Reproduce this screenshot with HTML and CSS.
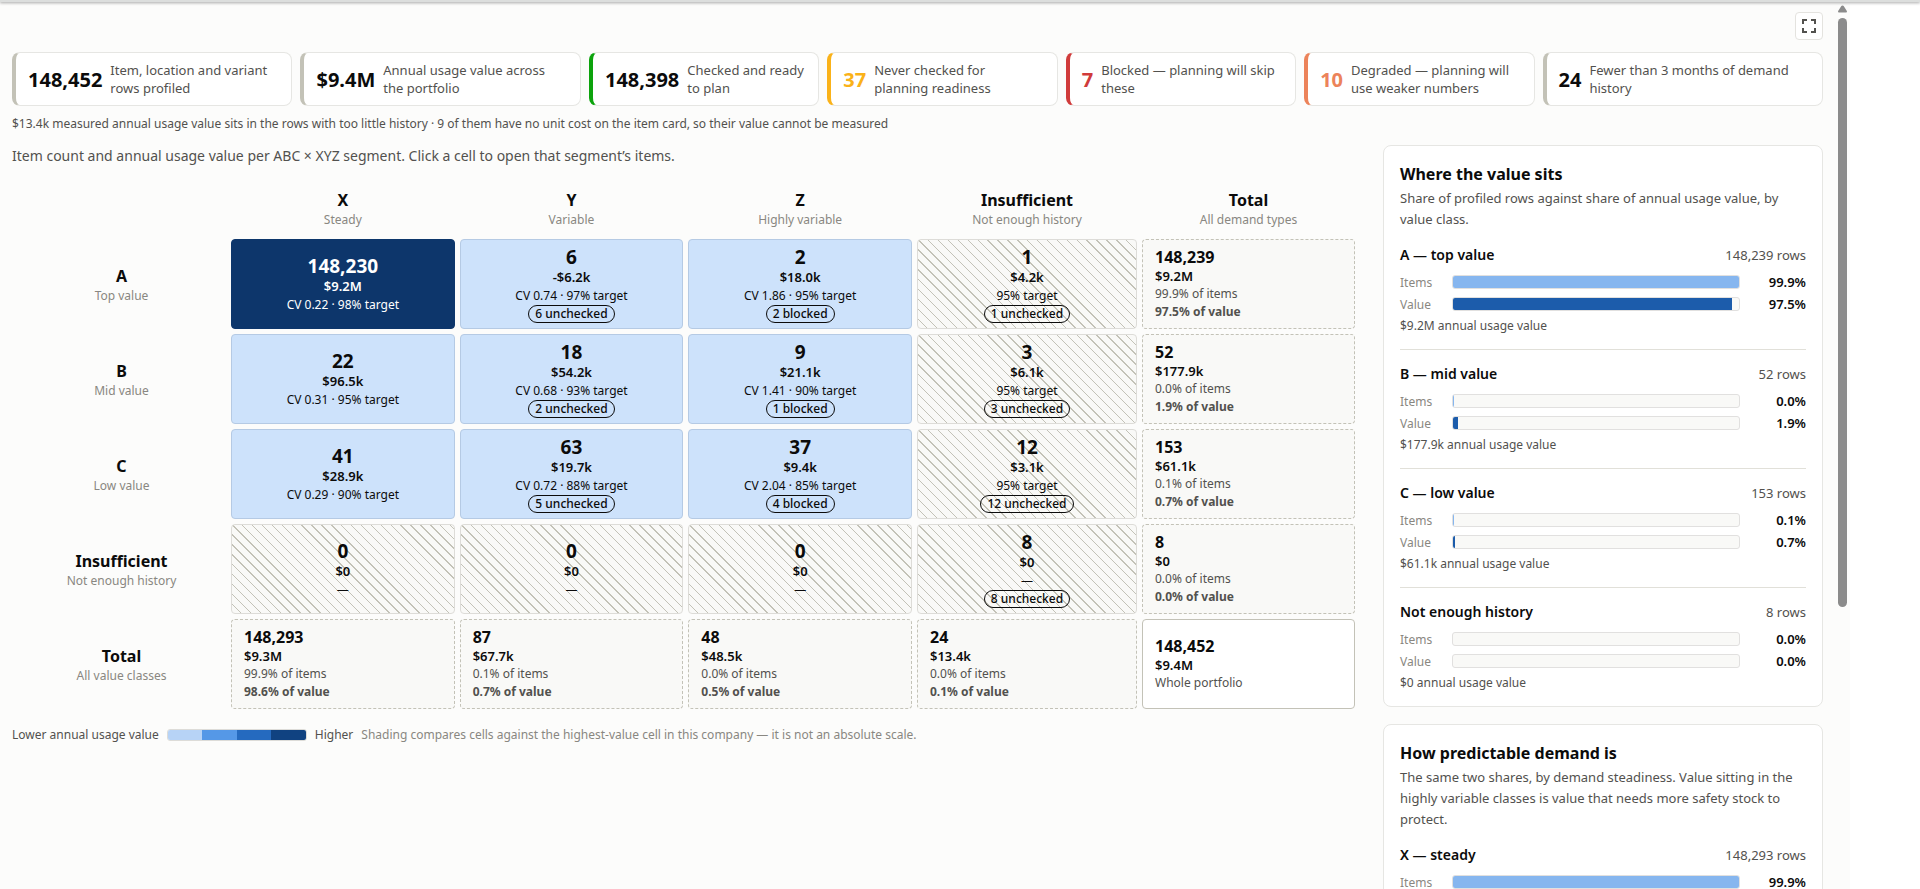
FILE: index.html
```
<!DOCTYPE html>
<html lang="en">

<head>
    <meta charset="UTF-8">
    <meta name="viewport" content="width=device-width, initial-scale=1.0">
    <title>ABC / XYZ segmentation</title>
    <link rel="stylesheet" href="styles.css">
</head>

<body>
    <header class="topbar"></header>
    <div class="page">
        <div class="content">
            <div class="toolbar">
                <button class="expand" aria-label="Full screen">
                    <svg width="16" height="16" viewBox="0 0 16 16" fill="none" stroke="#52514e" stroke-width="2">
                        <path d="M2 6V2h4M10 2h4v4M14 10v4h-4M6 14H2v-4" />
                    </svg>
                </button>
            </div>

            <div class="kpis">
                <div class="kpi"><strong>148,452</strong><span>Item, location and variant rows profiled</span></div>
                <div class="kpi"><strong>$9.4M</strong><span>Annual usage value across<br>the portfolio</span></div>
                <div class="kpi ready"><strong>148,398</strong><span>Checked and ready to plan</span></div>
                <div class="kpi unchecked"><strong>37</strong><span>Never checked for<br>planning readiness</span></div>
                <div class="kpi blocked"><strong>7</strong><span>Blocked — planning will skip these</span></div>
                <div class="kpi degraded"><strong>10</strong><span>Degraded — planning will use weaker numbers</span></div>
                <div class="kpi"><strong>24</strong><span>Fewer than 3 months of demand history</span></div>
            </div>
            <p class="note">$13.4k measured annual usage value sits in the rows with too little history · 9 of them have no unit cost on the item card, so their value cannot be measured</p>

            <div class="columns">
                <main>
                    <p class="intro">Item count and annual usage value per ABC × XYZ segment. Click a cell to open that segment’s items.</p>
                    <table class="matrix">
                        <colgroup>
                            <col class="col-head">
                            <col>
                            <col>
                            <col>
                            <col class="col-insufficient">
                            <col class="col-total">
                        </colgroup>
                        <thead>
                            <tr>
                                <td></td>
                                <th scope="col">X<small>Steady</small></th>
                                <th scope="col">Y<small>Variable</small></th>
                                <th scope="col">Z<small>Highly variable</small></th>
                                <th scope="col">Insufficient<small>Not enough history</small></th>
                                <th scope="col">Total<small>All demand types</small></th>
                            </tr>
                        </thead>
                        <tbody>
                            <tr>
                                <th scope="row">A<small>Top value</small></th>
                                <td><button class="cell top"><b>148,230</b><strong>$9.2M</strong><span>CV 0.22 · 98% target</span></button></td>
                                <td><button class="cell"><b>6</b><strong>-$6.2k</strong><span>CV 0.74 · 97% target</span><em>6 unchecked</em></button></td>
                                <td><button class="cell"><b>2</b><strong>$18.0k</strong><span>CV 1.86 · 95% target</span><em>2 blocked</em></button></td>
                                <td><button class="cell hatched"><b>1</b><strong>$4.2k</strong><span>95% target</span><em>1 unchecked</em></button></td>
                                <td><div class="total"><b>148,239</b><strong>$9.2M</strong><span>99.9% of items</span><span class="share">97.5% of value</span></div></td>
                            </tr>
                            <tr>
                                <th scope="row">B<small>Mid value</small></th>
                                <td><button class="cell"><b>22</b><strong>$96.5k</strong><span>CV 0.31 · 95% target</span></button></td>
                                <td><button class="cell"><b>18</b><strong>$54.2k</strong><span>CV 0.68 · 93% target</span><em>2 unchecked</em></button></td>
                                <td><button class="cell"><b>9</b><strong>$21.1k</strong><span>CV 1.41 · 90% target</span><em>1 blocked</em></button></td>
                                <td><button class="cell hatched"><b>3</b><strong>$6.1k</strong><span>95% target</span><em>3 unchecked</em></button></td>
                                <td><div class="total"><b>52</b><strong>$177.9k</strong><span>0.0% of items</span><span class="share">1.9% of value</span></div></td>
                            </tr>
                            <tr>
                                <th scope="row">C<small>Low value</small></th>
                                <td><button class="cell"><b>41</b><strong>$28.9k</strong><span>CV 0.29 · 90% target</span></button></td>
                                <td><button class="cell"><b>63</b><strong>$19.7k</strong><span>CV 0.72 · 88% target</span><em>5 unchecked</em></button></td>
                                <td><button class="cell"><b>37</b><strong>$9.4k</strong><span>CV 2.04 · 85% target</span><em>4 blocked</em></button></td>
                                <td><button class="cell hatched"><b>12</b><strong>$3.1k</strong><span>95% target</span><em>12 unchecked</em></button></td>
                                <td><div class="total"><b>153</b><strong>$61.1k</strong><span>0.1% of items</span><span class="share">0.7% of value</span></div></td>
                            </tr>
                            <tr>
                                <th scope="row">Insufficient<small>Not enough history</small></th>
                                <td><button class="cell hatched"><b>0</b><strong>$0</strong><span>—</span></button></td>
                                <td><button class="cell hatched"><b>0</b><strong>$0</strong><span>—</span></button></td>
                                <td><button class="cell hatched"><b>0</b><strong>$0</strong><span>—</span></button></td>
                                <td><button class="cell hatched"><b>8</b><strong>$0</strong><span>—</span><em>8 unchecked</em></button></td>
                                <td><div class="total"><b>8</b><strong>$0</strong><span>0.0% of items</span><span class="share">0.0% of value</span></div></td>
                            </tr>
                            <tr>
                                <th scope="row">Total<small>All value classes</small></th>
                                <td><div class="total"><b>148,293</b><strong>$9.3M</strong><span>99.9% of items</span><span class="share">98.6% of value</span></div></td>
                                <td><div class="total"><b>87</b><strong>$67.7k</strong><span>0.1% of items</span><span class="share">0.7% of value</span></div></td>
                                <td><div class="total"><b>48</b><strong>$48.5k</strong><span>0.0% of items</span><span class="share">0.5% of value</span></div></td>
                                <td><div class="total"><b>24</b><strong>$13.4k</strong><span>0.0% of items</span><span class="share">0.1% of value</span></div></td>
                                <td><div class="total grand"><b>148,452</b><strong>$9.4M</strong><span>Whole portfolio</span></div></td>
                            </tr>
                        </tbody>
                    </table>
                    <div class="legend">
                        <span>Lower annual usage value</span>
                        <div class="scale"><i></i><i></i><i></i><i></i></div>
                        <span>Higher</span>
                        <span class="hint">Shading compares cells against the highest-value cell in this company — it is not an absolute scale.</span>
                    </div>
                </main>

                <aside>
                    <section class="panel">
                        <h2>Where the value sits</h2>
                        <p>Share of profiled rows against share of annual usage value, by value class.</p>
                        <div class="group">
                            <div class="group-head"><h3>A — top value</h3><span>148,239 rows</span></div>
                            <div class="row"><span>Items</span><div class="track"><div class="bar" style="width: 99.9%"></div></div><b>99.9%</b></div>
                            <div class="row"><span>Value</span><div class="track"><div class="bar value" style="width: 97.5%"></div></div><b>97.5%</b></div>
                            <div class="foot">$9.2M annual usage value</div>
                        </div>
                        <div class="group">
                            <div class="group-head"><h3>B — mid value</h3><span>52 rows</span></div>
                            <div class="row"><span>Items</span><div class="track"><div class="bar" style="width: 0.3%"></div></div><b>0.0%</b></div>
                            <div class="row"><span>Value</span><div class="track"><div class="bar value" style="width: 1.9%"></div></div><b>1.9%</b></div>
                            <div class="foot">$177.9k annual usage value</div>
                        </div>
                        <div class="group">
                            <div class="group-head"><h3>C — low value</h3><span>153 rows</span></div>
                            <div class="row"><span>Items</span><div class="track"><div class="bar" style="width: 0.3%"></div></div><b>0.1%</b></div>
                            <div class="row"><span>Value</span><div class="track"><div class="bar value" style="width: 0.7%"></div></div><b>0.7%</b></div>
                            <div class="foot">$61.1k annual usage value</div>
                        </div>
                        <div class="group">
                            <div class="group-head"><h3>Not enough history</h3><span>8 rows</span></div>
                            <div class="row"><span>Items</span><div class="track"></div><b>0.0%</b></div>
                            <div class="row"><span>Value</span><div class="track"></div><b>0.0%</b></div>
                            <div class="foot">$0 annual usage value</div>
                        </div>
                    </section>
                    <section class="panel">
                        <h2>How predictable demand is</h2>
                        <p>The same two shares, by demand steadiness. Value sitting in the highly variable classes is value that needs more safety stock to protect.</p>
                        <div class="group">
                            <div class="group-head"><h3>X — steady</h3><span>148,293 rows</span></div>
                            <div class="row"><span>Items</span><div class="track"><div class="bar" style="width: 99.9%"></div></div><b>99.9%</b></div>
                        </div>
                    </section>
                </aside>
            </div>
        </div>
        <div class="scrollbar">
            <svg width="9" height="8" viewBox="0 0 10 8"><path d="M5 0Q6 0 6.500 1L10 6.500Q10 8 9 8H1Q0 8 0 6.500L3.500 1Q4 0 5 0Z" fill="#8b8b8b" /></svg>
            <div class="thumb"></div>
        </div>
    </div>
</body>

</html>
```

FILE: styles.css
```
* {
    box-sizing: border-box;
}

body {
    display: flex;
    flex-direction: column;
    margin: 0;
    height: 100vh;
    overflow: hidden;
    background: #fff;
    color: #0b0b0b;
    font-family: "Segoe UI", "Noto Sans", "Open Sans", sans-serif;
    font-size: 13px;
}

button {
    font: inherit;
    color: inherit;
    cursor: pointer;
}

p, h2, h3 {
    margin: 0;
}

/* bottom edge of the app header, with its shadow over the page */
.topbar {
    flex: none;
    position: relative;
    z-index: 1;
    height: 2px;
    background: #dcdedd;
    box-shadow: 0 1px 3px rgba(0, 0, 0, 0.4);
}

.page {
    display: flex;
    flex: 1;
    min-height: 0;
    margin-right: 70px;
    background: #fcfcfb;
}

.content {
    flex: 1;
    padding: 10px 15px 0 12px;
}

.toolbar {
    display: flex;
    justify-content: flex-end;
    margin-bottom: 12px;
}
.expand {
    display: flex;
    align-items: center;
    justify-content: center;
    width: 28px;
    height: 28px;
    padding: 0;
    background: #fff;
    border: 1px solid #e4e3df;
    border-radius: 4px;
}

/* KPI strip */
.kpis {
    display: grid;
    grid-template-columns: 28fr 28fr 23fr 23fr 23fr 23fr 28fr;
    gap: 8px;
}
.kpi {
    display: flex;
    align-items: center;
    gap: 8px;
    height: 54px;
    padding: 0 12px;
    background: #fff;
    border: 1px solid #e6e6e3;
    border-left: 4px solid #c3c2b7;
    border-radius: 8px;
    line-height: 18px;
}
.kpi strong {
    padding-top: 2px;
    font-size: 20px;
    font-weight: 700;
}
.kpi span {
    color: #52514e;
}
.ready {
    border-left-color: #0ca30c;
}
.unchecked {
    border-left-color: #fab219;
}
.unchecked strong {
    color: #fab219;
}
.blocked {
    border-left-color: #d03b3b;
}
.blocked strong {
    color: #d03b3b;
}
.degraded {
    border-left-color: #ec835a;
}
.degraded strong {
    color: #ec835a;
}

.note {
    margin-top: 9px;
    font-size: 12px;
    line-height: 18px;
    color: #52514e;
}

.columns {
    display: grid;
    grid-template-columns: 1fr 440px;
    gap: 23px;
    margin-top: 12px;
}
.intro {
    font-size: 14px;
    line-height: 22px;
    color: #52514e;
}

/* segment matrix */
.matrix {
    width: 100%;
    margin-top: 12px;
    table-layout: fixed;
    border-spacing: 5px;
}
.matrix th,
.matrix td {
    padding: 0;
}
.matrix th {
    padding-top: 2px;
    font-size: 16px;
    line-height: 22px;
    font-weight: 700;
}
.matrix thead th {
    height: 50px;
    padding-bottom: 2px;
}
.matrix small {
    display: block;
    font-size: 12px;
    line-height: 18px;
    font-weight: 400;
    color: #898781;
}
.col-head {
    width: 209px;
}
.col-insufficient {
    width: 220px;
}
.col-total {
    width: 213px;
}
.cell,
.total {
    display: flex;
    flex-direction: column;
    justify-content: center;
    width: 100%;
    height: 90px;
    border-radius: 4px;
    line-height: 18px;
}
.cell {
    align-items: center;
    padding: 0;
    background: #cde2fb;
    border: 1px solid #b5cae4;
}
.cell b {
    font-size: 19px;
    line-height: 22px;
}
.cell b,
.total b {
    font-weight: 700;
}
.cell strong,
.total strong {
    font-weight: 600;
}
.cell span,
.total span {
    font-size: 12px;
}
.cell span {
    margin-top: 1px;
}
.cell em {
    padding: 0 6px;
    border: 1px solid #0b0b0b;
    border-radius: 9px;
    font-size: 12px;
    line-height: 16px;
    font-style: normal;
    font-weight: 500;
}
.top {
    background: #0d366b;
    border-color: #0d366b;
    color: #fff;
}
.hatched {
    background: repeating-linear-gradient(45deg, #f9f9f7 0 6px, #c3c2b7 6px 7px);
    border-color: #dddcd8;
}
.total {
    padding: 0 12px;
    background: #f9f9f7;
    border: 1px dashed #c3c2b7;
}
.total b {
    font-size: 16px;
    line-height: 20px;
}
.total span {
    color: #52514e;
}
.total .share {
    font-weight: 700;
}
.grand {
    background: #fff;
    border-style: solid;
}

.legend {
    display: flex;
    align-items: center;
    gap: 8px;
    margin-top: 12px;
    font-size: 12px;
    line-height: 18px;
    color: #52514e;
}
.scale {
    display: flex;
    width: 140px;
    height: 12px;
    border: 1px solid #dddcd8;
    border-radius: 3px;
    overflow: hidden;
}
.scale i {
    flex: 1;
    background: #b7d3f6;
}
.scale i:nth-child(2) {
    background: #5598e7;
}
.scale i:nth-child(3) {
    background: #256abf;
}
.scale i:nth-child(4) {
    background: #104281;
}
.hint {
    color: #898781;
}

/* side panels */
.panel {
    padding: 16px 16px 12px;
    margin-bottom: 17px;
    background: #fff;
    border: 1px solid #e6e6e3;
    border-radius: 8px;
}
.panel h2 {
    font-size: 16px;
    line-height: 24px;
    font-weight: 700;
}
.panel p {
    margin: 2px 0 1px;
    line-height: 21px;
    color: #52514e;
}
.group {
    padding: 12px 0;
    border-bottom: 1px solid #e1e0d9;
}
.group:last-child {
    padding-bottom: 0;
    border-bottom: 0;
}
.group-head {
    display: flex;
    justify-content: space-between;
    height: 24px;
    line-height: 24px;
    margin-bottom: 4px;
    color: #52514e;
}
.group-head h3 {
    color: #0b0b0b;
    font-size: 14px;
    font-weight: 600;
}
.row {
    display: grid;
    grid-template-columns: 42px 1fr 56px;
    gap: 10px;
    align-items: center;
    height: 22px;
    font-size: 12px;
    color: #898781;
}
.row b {
    font-size: 13px;
    font-weight: 600;
    color: #0b0b0b;
    text-align: right;
}
.track {
    height: 14px;
    background: #f9f9f7;
    border: 1px solid #e1e0df;
    border-radius: 3px;
    overflow: hidden;
}
.bar {
    height: 100%;
    background: #86b6ef;
}
.bar.value {
    background: #1c5cab;
}
.foot {
    font-size: 12px;
    line-height: 22px;
    color: #52514e;
}

.scrollbar {
    display: flex;
    flex-direction: column;
    align-items: center;
    gap: 5px;
    width: 12px;
    padding: 3px 3px 0 0;
}
.thumb {
    width: 9px;
    height: 589px;
    border-radius: 5px;
    background: #8b8b8b;
}
```
